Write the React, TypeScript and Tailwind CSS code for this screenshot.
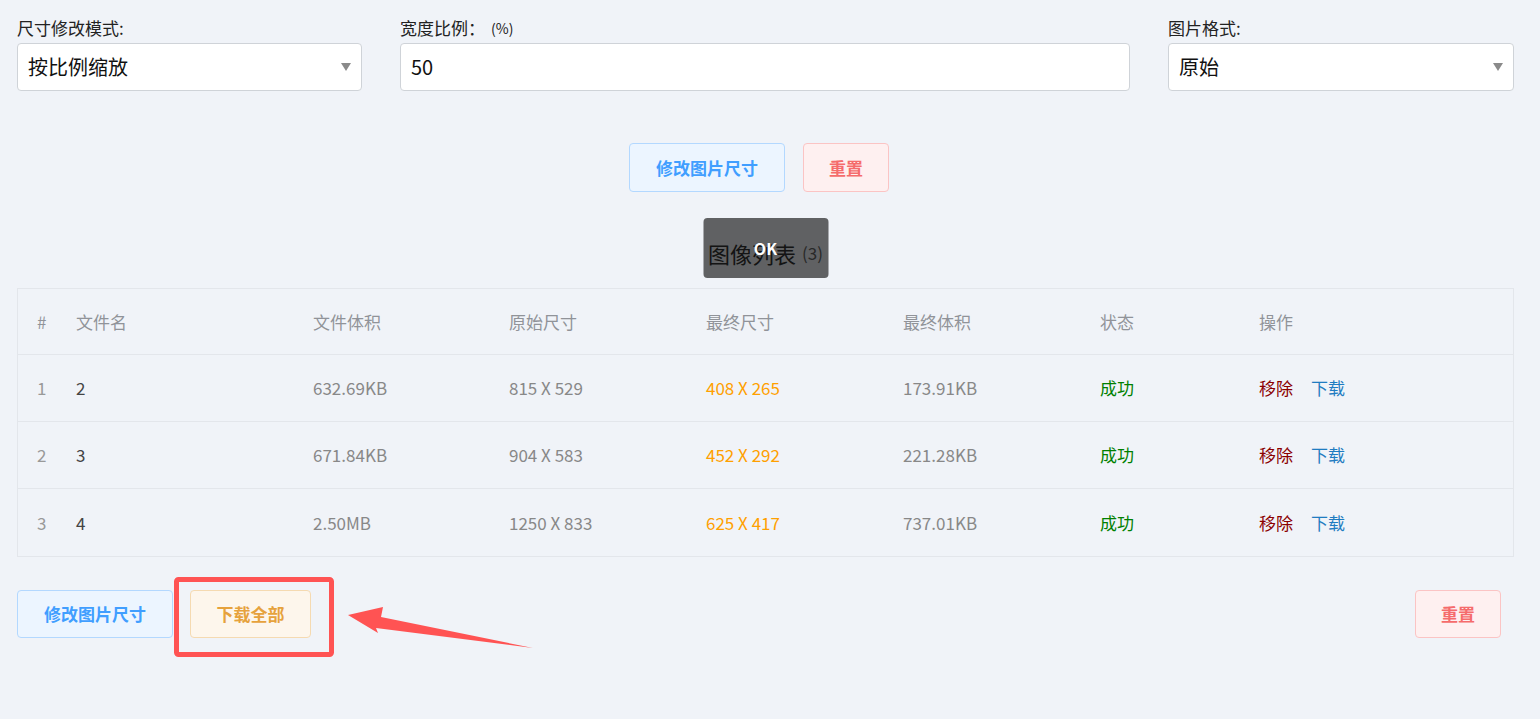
import { ReactNode } from "react";

const font = { fontFamily: '"Noto Sans CJK SC", "Noto Sans", sans-serif' };

type Row = {
  no: number;
  name: string;
  size: string;
  origin: string;
  final: string;
  finalSize: string;
};

const rows: Row[] = [
  { no: 1, name: "2", size: "632.69KB", origin: "815 X 529", final: "408 X 265", finalSize: "173.91KB" },
  { no: 2, name: "3", size: "671.84KB", origin: "904 X 583", final: "452 X 292", finalSize: "221.28KB" },
  { no: 3, name: "4", size: "2.50MB", origin: "1250 X 833", final: "625 X 417", finalSize: "737.01KB" },
];

const cols = "grid grid-cols-[39px_237px_196px_197px_197px_197px_159px_1fr] items-center pl-[19px]";

function Field({ label, children }: { label: ReactNode; children: ReactNode }) {
  return (
    <div className="flex flex-col">
      <div className="mb-[3px] flex h-6 items-center text-[17px] leading-6 text-[#222]">{label}</div>
      {children}
    </div>
  );
}

function SelectBox({ value }: { value: string }) {
  return (
    <div className="flex h-[48px] items-center justify-between rounded-[4px] border border-[#cfd3d8] bg-white pl-[10px] pr-[10px]">
      <span className="text-[20px] text-[#111]">{value}</span>
      <span className="h-0 w-0 border-x-[5px] border-t-[8px] border-x-transparent border-t-[#8a8a8a]" />
    </div>
  );
}

function Btn({ kind, tall, children }: { kind: "primary" | "danger" | "warning"; tall?: boolean; children: ReactNode }) {
  const styles = {
    primary: "w-[156px] border-[#b3d8ff] bg-[#ecf5ff] text-[#409eff]",
    danger: "w-[86px] border-[#fbc4c4] bg-[#fef0f0] text-[#f56c6c]",
    warning: "w-[121px] border-[#f5dab1] bg-[#fdf6ec] text-[#e6a23c]",
  }[kind];
  return (
    <button
      type="button"
      className={`flex items-center justify-center rounded-[4px] border text-[17px] font-semibold ${tall ? "h-[49px]" : "h-[48px]"} ${styles}`}
    >
      {children}
    </button>
  );
}

export default function App() {
  return (
    <div style={font} className="relative min-h-screen bg-[#f0f3f8] pl-[17px] pr-[26px] pt-4">
      <div className="grid grid-cols-[345px_730px_346px] gap-x-[38px]">
        <Field label="尺寸修改模式:">
          <SelectBox value="按比例缩放" />
        </Field>
        <Field
          label={
            <>
              宽度比例：<span className="ml-[6px] text-[14px] text-[#222]">(%)</span>
            </>
          }
        >
          <div className="flex h-[48px] items-center rounded-[4px] border border-[#cfd3d8] bg-white pl-[10px] text-[20px] text-[#111]">
            50
          </div>
        </Field>
        <Field label="图片格式:">
          <SelectBox value="原始" />
        </Field>
      </div>

      <div className="mt-[52px] flex justify-center gap-[18px] pr-[13px]">
        <Btn kind="primary" tall>修改图片尺寸</Btn>
        <Btn kind="danger" tall>重置</Btn>
      </div>

      <div className="relative mt-[46px] mb-[20px] flex h-[30px] items-center justify-center">
        <span className="text-[22px] leading-[30px] text-[#333]">图像列表</span>
        <span className="ml-[6px] text-[17px] text-[#666]">(3)</span>
        <div className="absolute left-1/2 top-[-20px] flex h-[60px] w-[125px] -translate-x-1/2 items-center justify-center rounded-[4px] bg-black/60">
          <span className="text-[16px] font-bold text-white">OK</span>
        </div>
      </div>

      <div className="border border-[#e3e6eb]">
        <div className={`${cols} h-[66px] border-b border-[#e3e6eb] text-[17px] text-[#909399]`}>
          <span>#</span>
          <span>文件名</span>
          <span>文件体积</span>
          <span>原始尺寸</span>
          <span>最终尺寸</span>
          <span>最终体积</span>
          <span>状态</span>
          <span>操作</span>
        </div>
        {rows.map((r, i) => (
          <div
            key={r.no}
            className={`${cols} h-[67px] text-[17px] ${i < rows.length - 1 ? "border-b border-[#e3e6eb]" : ""}`}
          >
            <span className="text-[#999]">{r.no}</span>
            <span className="text-[#444]">{r.name}</span>
            <span className="text-[#888]">{r.size}</span>
            <span className="text-[#888]">{r.origin}</span>
            <span className="text-[#ffa000]">{r.final}</span>
            <span className="text-[#888]">{r.finalSize}</span>
            <span className="text-[#008000]">成功</span>
            <span className="flex gap-[18px]">
              <span className="text-[#8b0000]">移除</span>
              <span className="text-[#1f7cc1]">下载</span>
            </span>
          </div>
        ))}
      </div>

      <div className="mt-[33px] flex items-center justify-between pr-[13px]">
        <div className="flex gap-[17px]">
          <Btn kind="primary">修改图片尺寸</Btn>
          <Btn kind="warning">下载全部</Btn>
        </div>
        <Btn kind="danger">重置</Btn>
      </div>

      <svg className="pointer-events-none absolute left-0 top-0" width="1540" height="719">
        <rect x="176.5" y="579.5" width="155" height="75" rx="2" fill="none" stroke="#ff5353" strokeWidth="5" />
        <polygon
          points="348,615 383,607 381,617 533,648 376,628 378,633"
          fill="#ff5353"
        />
      </svg>
    </div>
  );
}
